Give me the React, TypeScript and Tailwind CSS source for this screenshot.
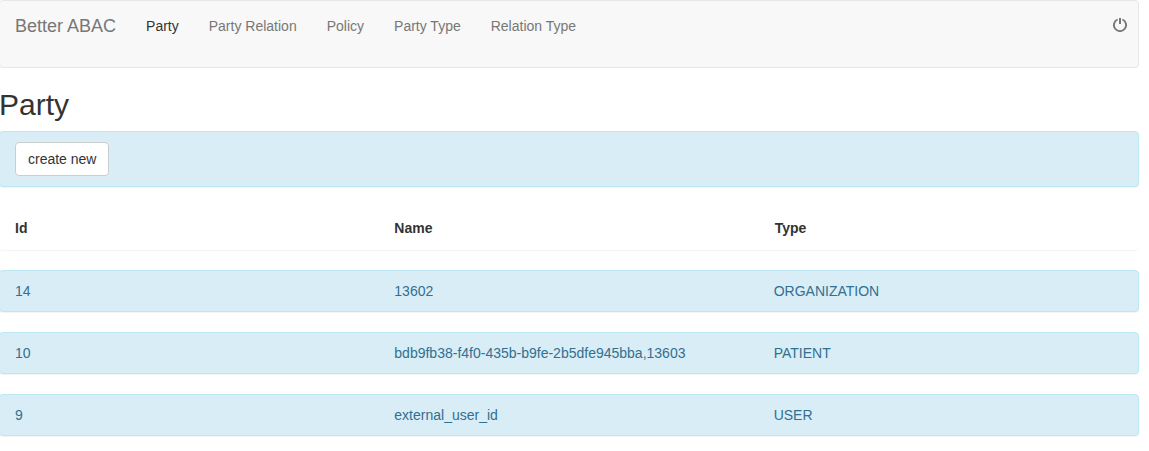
const navItems = ["Party", "Party Relation", "Policy", "Party Type", "Relation Type"];

const parties = [
  { id: "14", name: "13602", type: "ORGANIZATION" },
  { id: "10", name: "bdb9fb38-f4f0-435b-b9fe-2b5dfe945bba,13603", type: "PATIENT" },
  { id: "9", name: "external_user_id", type: "USER" },
];

function PowerIcon() {
  return (
    <svg className="block h-[14px] w-[14px]" viewBox="0 0 14 14" fill="none" stroke="currentColor" aria-hidden="true">
      <path d="M4.6 1.5A6.05 6.05 0 1 0 9.4 1.5" strokeWidth="1.9" />
      <path d="M7 0V6" strokeWidth="2" />
    </svg>
  );
}

function Navbar() {
  return (
    <nav className="flex h-[68px] items-start rounded border border-[#e7e7e7] bg-[#f8f8f8] leading-5 text-[#777]">
      <a href="#" className="p-[15px] text-[18px]">
        Better ABAC
      </a>
      <ul className="flex">
        {navItems.map((item, i) => (
          <li key={item}>
            <a href="#" className={i === 0 ? "block p-[15px] text-[#333]" : "block p-[15px]"}>
              {item}
            </a>
          </li>
        ))}
      </ul>
      <a href="#" aria-label="Log out" className="ml-auto pt-[17px] pr-[11px]">
        <PowerIcon />
      </a>
    </nav>
  );
}

const panel = "rounded border px-[15px] pt-[10px] shadow-[0_1px_1px_rgba(0,0,0,0.05)]";

export default function App() {
  return (
    <div className="-ml-px w-[1140px] bg-white font-['Liberation_Sans',Arial,sans-serif] text-[14px] leading-5 text-[#333]">
      <Navbar />
      <h1 className="mt-5 mb-[10px] text-[30px] leading-[33px] font-medium">Party</h1>
      <div className={`${panel} mb-5 border-[#bce8f1] bg-[#d9edf7] pb-[10px]`}>
        <button className="block h-[34px] rounded border border-[#ccc] bg-white px-3 leading-5">create new</button>
      </div>
      <div className={`${panel} mb-5 border-transparent bg-white pb-[11px]`}>
        <div className="-mx-[15px] grid grid-cols-3 font-bold">
          <div className="px-[15px]">Id</div>
          <div className="px-[15px]">Name</div>
          <div className="pr-[15px] pl-4">Type</div>
        </div>
      </div>
      {parties.map((p) => (
        <div key={p.id} className={`${panel} mb-5 border-[#bce8f1] bg-[#d9edf7] pb-[10px] text-[#31708f]`}>
          <div className="-mx-[15px] grid grid-cols-3">
            <div className="px-[15px]">{p.id}</div>
            <div className="px-[15px]">{p.name}</div>
            <div className="px-[15px]">{p.type}</div>
          </div>
        </div>
      ))}
    </div>
  );
}
